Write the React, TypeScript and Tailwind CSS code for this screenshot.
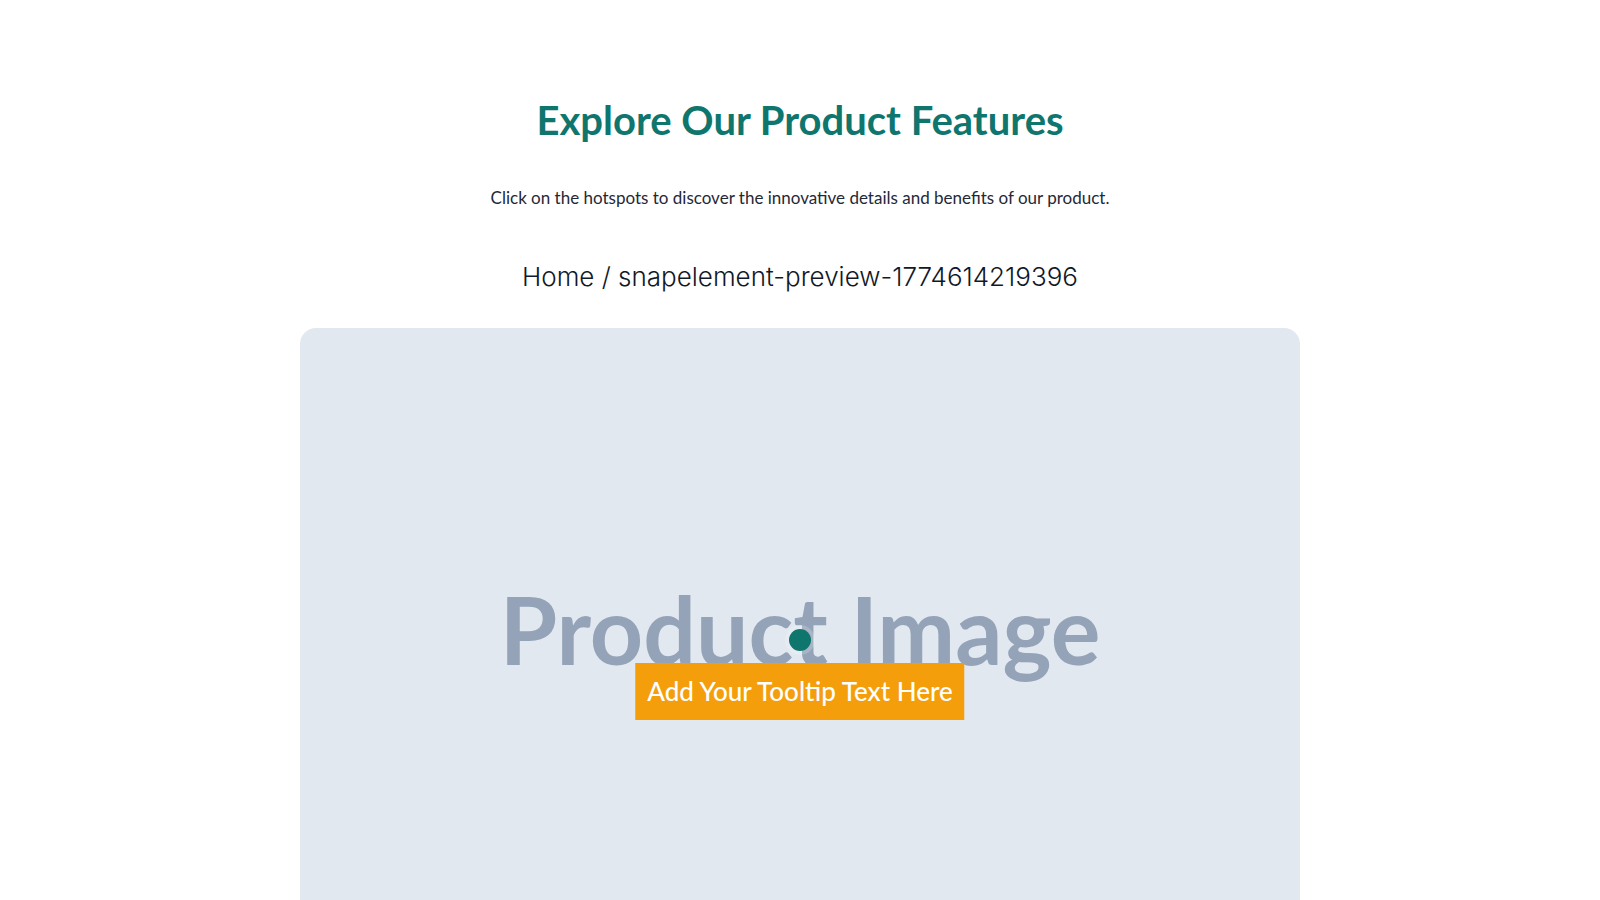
import React from "react";

export default function App() {
  return (
    <div className="min-h-screen bg-white flex flex-col items-center" style={{ fontFamily: "Lato, 'Noto Sans', sans-serif" }}>
      <h2 className="mt-[94px] text-[40px] leading-[52px] font-bold text-[#0f766e]" style={{ fontFamily: "Lato, sans-serif" }}>
        Explore Our Product Features
      </h2>
      <p className="mt-[40px] text-[17px] leading-[24px] text-[#1f2937]">
        Click on the hotspots to discover the innovative details and benefits of our product.
      </p>
      <div className="mt-[50px] text-[26px] leading-[34px] font-light text-[#111827]" style={{ fontFamily: "Inter, sans-serif" }}>
        Home / snapelement-preview-1774614219396
      </div>
      <div className="mt-[34px] w-[1000px] h-[600px] shrink-0 rounded-2xl bg-[#e2e8f0] relative flex items-center justify-center pt-[4px]">
        <span className="text-[93px] font-bold text-[#94a3b8]" style={{ fontFamily: "Lato, sans-serif" }}>
          Product Image
        </span>
        <div className="absolute left-1/2 top-[312px] -translate-x-1/2 -translate-y-1/2 w-[22px] h-[22px] rounded-full bg-[#0f766e] ring-4 ring-white/20"></div>
        <div className="absolute left-1/2 top-[335px] -translate-x-1/2 bg-[#f59e0b] text-white text-[26px] leading-[57px] px-3 whitespace-nowrap font-medium">
          Add Your Tooltip Text Here
        </div>
      </div>
    </div>
  );
}
